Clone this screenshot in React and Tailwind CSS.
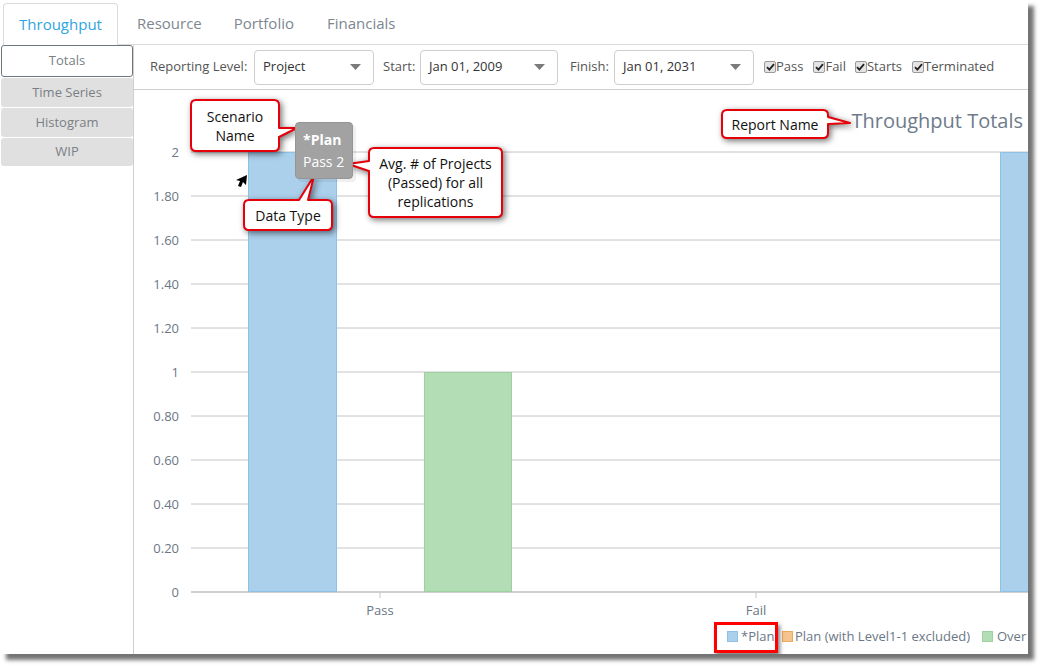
import React from "react";

const ticks = ["2", "1.80", "1.60", "1.40", "1.20", "1", "0.80", "0.60", "0.40", "0.20", "0"];

function Caret() {
    return (
        <svg width="11" height="6" viewBox="0 0 11 6">
            <path d="M0 0 H11 L5.5 6 Z" fill="#7b7b7b" />
        </svg>
    );
}

function Select({ value, width }) {
    return (
        <div
            className={`h-[35px] border border-[#cfcfcf] rounded-[4px] bg-white flex items-center justify-between pl-[8px] pr-[12px] text-[13px] text-[#333] ${width}`}
        >
            <span>{value}</span>
            <Caret />
        </div>
    );
}

function Check({ label, className }) {
    return (
        <label className={`flex items-center text-[13px] text-[#555] ${className}`}>
            <span className="w-[12px] h-[12px] rounded-[2px] border border-[#9a9a9a] bg-[#e4e4e4] flex items-center justify-center">
                <svg width="9" height="8" viewBox="0 0 9 8">
                    <path d="M1 4.2 L3.4 6.6 L8 1.2" stroke="#222" strokeWidth="1.8" fill="none" />
                </svg>
            </span>
            <span>{label}</span>
        </label>
    );
}

function Chart() {
    return (
        <svg width="894" height="564" className="block">
            {ticks.map((t, i) => {
                const y = 62 + 44 * i;
                return (
                    <g key={t}>
                        <line x1="57" x2="894" y1={y} y2={y} stroke={i === 10 ? "#cfcfcf" : "#c4c4c4"} strokeWidth={i === 10 ? 2 : 1} />
                        <text x="45" y={y + 5} textAnchor="end" fontSize="13" fill="#6b7785">
                            {t}
                        </text>
                    </g>
                );
            })}
            <rect x="114.5" y="62.5" width="88" height="439" fill="#abd0ec" stroke="#8fc0e6" />
            <rect x="290.5" y="282.5" width="87" height="219" fill="#b3ddb4" stroke="#9fd1a0" />
            <rect x="866.5" y="62.5" width="88" height="439" fill="#abd0ec" stroke="#8fc0e6" />
            <line x1="246" x2="246" y1="503" y2="508" stroke="#c4c4c4" />
            <line x1="622" x2="622" y1="503" y2="508" stroke="#c4c4c4" />
            <text x="246" y="525" textAnchor="middle" fontSize="13" fill="#6b7785">Pass</text>
            <text x="622" y="525" textAnchor="middle" fontSize="13" fill="#6b7785">Fail</text>
            <text x="889" y="38" textAnchor="end" fontSize="20" fill="#6e7b8a">Throughput Totals</text>

            <rect x="593.5" y="541.5" width="10" height="10" fill="#abd0ec" stroke="#8fc0e6" />
            <text x="607" y="551" fontSize="13" fill="#6b7785">*Plan</text>
            <rect x="648.5" y="541.5" width="10" height="10" fill="#f6c48f" stroke="#efa95e" />
            <text x="661" y="551" fontSize="13" fill="#6b7785">Plan (with Level1-1 excluded)</text>
            <rect x="848.5" y="541.5" width="10" height="10" fill="#b3ddb4" stroke="#9fd1a0" />
            <text x="863" y="551" fontSize="13" fill="#6b7785">Over</text>
        </svg>
    );
}

function Callouts() {
    const red = "#e5000a";
    const style = { filter: "drop-shadow(2px 2px 3px rgba(0,0,0,0.55))" };
    return (
        <div className="absolute inset-0 pointer-events-none">
            <svg width="1028" height="654" className="absolute left-0 top-0">
                <g style={style} fill="#fff" stroke={red} strokeWidth="2" strokeLinejoin="round">
                    <path d="M196 100 H274 Q279 100 279 105 V128 L297 128 L279 137 V146 Q279 151 274 151 H196 Q191 151 191 146 V105 Q191 100 196 100 Z" />
                    <path d="M374 148 H497 Q502 148 502 153 V212 Q502 217 497 217 H374 Q369 217 369 212 V171 L348 164 L369 161 V153 Q369 148 374 148 Z" />
                    <path d="M249 200 H299 L314 176 L308 200 H327 Q332 200 332 205 V225 Q332 230 327 230 H249 Q244 230 244 225 V205 Q244 200 249 200 Z" />
                    <path d="M727 110 H823 Q828 110 828 115 V117 L850 123 L828 124 V133 Q828 138 823 138 H727 Q722 138 722 133 V115 Q722 110 727 110 Z" />
                </g>
                <path d="M247 175 L236 180 L240 181 L238 186 L241 187 L243 182 L246 185 Z" fill="#000" />
            </svg>

            <div className="absolute left-[191px] top-[100px] w-[88px] h-[51px] flex flex-col items-center justify-center text-[14px] leading-[19px] text-[#111]">
                <span>Scenario</span>
                <span>Name</span>
            </div>
            <div className="absolute left-[369px] top-[148px] w-[133px] h-[69px] flex flex-col items-center justify-center text-[14px] leading-[19px] text-[#111]">
                <span>Avg. # of Projects</span>
                <span>(Passed) for all</span>
                <span>replications</span>
            </div>
            <div className="absolute left-[244px] top-[200px] w-[88px] h-[30px] flex items-center justify-center text-[14px] text-[#111]">
                Data Type
            </div>
            <div className="absolute left-[722px] top-[110px] w-[106px] h-[28px] flex items-center justify-center text-[14px] text-[#111]">
                Report Name
            </div>

            <div className="absolute left-[295px] top-[122px] w-[58px] h-[57px] rounded-[4px] bg-[#a2a2a2] border border-[#959595] shadow-[3px_3px_0_rgba(0,0,0,0.06)] flex flex-col justify-center pl-[7px] text-white">
                <span className="text-[14px] font-bold leading-[22px]">*Plan</span>
                <span className="text-[14px] leading-[22px]">Pass 2</span>
            </div>

            <div className="absolute left-[714px] top-[622px] w-[64px] h-[31px] border-[3px] border-[#ff0000] shadow-[2px_3px_4px_rgba(0,0,0,0.5)]" />
        </div>
    );
}

export default function App() {
    return (
        <div className="w-[1042px] h-[668px] bg-white font-['Open_Sans',sans-serif]">
            <div className="relative w-[1028px] h-[654px] bg-white shadow-[6px_6px_4px_rgba(0,0,0,0.55)] flex flex-col overflow-hidden">
                <div className="h-[45px] flex items-end shrink-0">
                    <div className="ml-[3px] w-[115px] h-[42px] border border-b-0 border-[#dcdcdc] rounded-t-[4px] bg-white flex items-center justify-center text-[15px] text-[#2ea5e3]">
                        Throughput
                    </div>
                    <div className="flex-1 h-full border-b border-[#dcdcdc] flex items-center pt-[3px] text-[15px] text-[#7d868f]">
                        <span className="ml-[19px]">Resource</span>
                        <span className="ml-[32px]">Portfolio</span>
                        <span className="ml-[33px]">Financials</span>
                    </div>
                </div>

                <div className="flex flex-1">
                    <div className="w-[134px] shrink-0 border-r border-[#cfcfcf] pl-[1px] flex flex-col gap-[1px] text-[13px] text-[#7a7f85]">
                        <div className="h-[32px] border border-[#6e767e] rounded-[3px] bg-white flex items-center justify-center">Totals</div>
                        <div className="h-[29px] rounded-[3px] bg-[#e0e0e0] flex items-center justify-center">Time Series</div>
                        <div className="h-[29px] rounded-[3px] bg-[#e0e0e0] flex items-center justify-center">Histogram</div>
                        <div className="h-[28px] rounded-[3px] bg-[#e0e0e0] flex items-center justify-center">WIP</div>
                    </div>

                    <div className="flex-1 flex flex-col">
                        <div className="h-[45px] shrink-0 border-b border-[#cfcfcf] flex items-center pl-[16px] text-[13px] text-[#555]">
                            <span className="w-[104px]">Reporting Level:</span>
                            <Select value="Project" width="w-[120px]" />
                            <span className="ml-[9px] w-[37px]">Start:</span>
                            <Select value="Jan 01, 2009" width="w-[138px]" />
                            <span className="ml-[12px] w-[44px]">Finish:</span>
                            <Select value="Jan 01, 2031" width="w-[140px]" />
                            <Check label="Pass" className="ml-[10px]" />
                            <Check label="Fail" className="ml-[10px]" />
                            <Check label="Starts" className="ml-[9px]" />
                            <Check label="Terminated" className="ml-[10px]" />
                        </div>
                        <div className="flex-1">
                            <Chart />
                        </div>
                    </div>
                </div>

                <Callouts />
            </div>
        </div>
    );
}
